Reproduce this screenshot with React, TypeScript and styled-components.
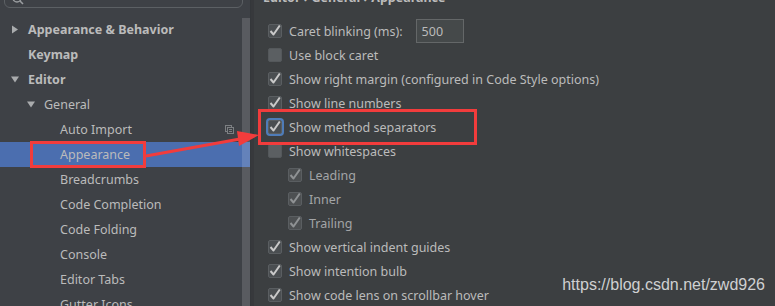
import React from 'react';
import styled, { createGlobalStyle } from 'styled-components';

const GlobalStyle = createGlobalStyle`
    body {
        margin: 0;
        background: #3c3f41;
        overflow: hidden;
    }
`;

const Frame = styled.div`
    position: relative;
    display: flex;
    width: 775px;
    height: 306px;
    overflow: hidden;
    font-family: 'Noto Sans', 'Open Sans', sans-serif;
    font-size: 12.5px;
    color: #bbbbbb;
    background: #3c3f41;
`;

const Sidebar = styled.aside`
    position: relative;
    width: 250px;
    flex-shrink: 0;
    background: #3e4146;
    display: flex;
    flex-direction: column;
`;

const SearchBox = styled.div`
    flex-shrink: 0;
    height: 24px;
    box-sizing: border-box;
    margin: -16px 7px 0 4px;
    border: 1px solid #5c6064;
    border-radius: 6px;
    display: flex;
    align-items: flex-end;
    padding: 0 0 2px 7px;
`;

const Tree = styled.ul`
    flex-shrink: 0;
    list-style: none;
    margin: 9px 0 0;
    padding: 0;
`;

const TreeRow = styled.li<{ $level: number; $selected?: boolean; $bold?: boolean }>`
    height: 25px;
    display: flex;
    align-items: center;
    padding-left: ${p => 11 + p.$level * 16}px;
    background: ${p => (p.$selected ? '#4b6eaf' : 'transparent')};
    font-weight: ${p => (p.$bold ? 700 : 400)};
    color: #bbbbbb;
    white-space: nowrap;
`;

const Caret = styled.span<{ $open?: boolean; $hidden?: boolean }>`
    width: 17px;
    flex-shrink: 0;
    display: flex;
    align-items: center;
    visibility: ${p => (p.$hidden ? 'hidden' : 'visible')};
    svg {
        transform: rotate(${p => (p.$open ? 90 : 0)}deg);
    }
`;

const RowLabel = styled.span`
    flex: 1;
`;

const RowIcon = styled.span`
    margin-right: 16px;
    display: flex;
`;

const ScrollThumb = styled.div`
    position: absolute;
    right: 0;
    top: 18px;
    bottom: 0;
    width: 8px;
    background: rgba(255, 255, 255, 0.14);
`;

const Divider = styled.div`
    width: 3px;
    flex-shrink: 0;
    background: #37393c;
    border-left: 1px solid #34373a;
`;

const Content = styled.section`
    flex: 1;
    display: flex;
    flex-direction: column;
    padding-left: 9px;
`;

const Breadcrumb = styled.div`
    flex-shrink: 0;
    margin-top: -11px;
    height: 18px;
    line-height: 18px;
    font-weight: 700;
    white-space: nowrap;
`;

const Options = styled.div`
    flex-shrink: 0;
    margin-top: 12px;
    padding-left: 5px;
    display: flex;
    flex-direction: column;
`;

const OptionRow = styled.label<{ $indent?: boolean; $dim?: boolean }>`
    flex-shrink: 0;
    height: 24px;
    display: flex;
    align-items: center;
    gap: 7px;
    padding-left: ${p => (p.$indent ? 20 : 0)}px;
    color: ${p => (p.$dim ? '#a3a5a7' : '#bbbbbb')};
    white-space: nowrap;
`;

const Box = styled.span<{ $checked?: boolean; $disabled?: boolean; $focused?: boolean }>`
    width: 14px;
    height: 14px;
    box-sizing: border-box;
    border-radius: 2px;
    flex-shrink: 0;
    display: flex;
    align-items: center;
    justify-content: center;
    background: ${p => (p.$checked ? (p.$disabled ? '#4d5052' : '#4a4e51') : '#5b5f62')};
    border: 1px solid ${p => (p.$checked ? '#5a5e61' : '#54585b')};
    box-shadow: ${p => (p.$focused ? '0 0 0 2px #4f7cb8' : 'none')};
`;

const NumberInput = styled.span`
    margin-left: 6px;
    width: 48px;
    height: 24px;
    box-sizing: border-box;
    border: 1px solid #646768;
    background: #45494a;
    display: flex;
    align-items: center;
    padding-left: 5px;
`;

const Overlay = styled.svg`
    position: absolute;
    left: 0;
    top: 0;
    pointer-events: none;
`;

const Watermark = styled.div`
    position: absolute;
    right: 10px;
    bottom: 12px;
    font-family: 'Liberation Sans', Arial, sans-serif;
    font-size: 16px;
    color: #cfd0d1;
`;

const Arrow = () => (
    <svg width="8" height="9" viewBox="0 0 8 9">
        <path d="M1 0.5 L7 4.5 L1 8.5 Z" fill="#a9abad" />
    </svg>
);

const Check = ({ color }: { color: string }) => (
    <svg width="12" height="12" viewBox="0 0 12 12">
        <path d="M1.5 6 L4.5 9.5 L10.8 0.5" fill="none" stroke={color} strokeWidth="2" strokeLinejoin="round" />
    </svg>
);

type Item = { label: string; level: number; bold?: boolean; open?: boolean; leaf?: boolean; selected?: boolean; icon?: boolean };

const treeItems: Item[] = [
    { label: 'Appearance & Behavior', level: 0, bold: true },
    { label: 'Keymap', level: 0, bold: true, leaf: true },
    { label: 'Editor', level: 0, bold: true, open: true },
    { label: 'General', level: 1, open: true },
    { label: 'Auto Import', level: 2, leaf: true, icon: true },
    { label: 'Appearance', level: 2, leaf: true, selected: true },
    { label: 'Breadcrumbs', level: 2, leaf: true },
    { label: 'Code Completion', level: 2, leaf: true },
    { label: 'Code Folding', level: 2, leaf: true },
    { label: 'Console', level: 2, leaf: true },
    { label: 'Editor Tabs', level: 2, leaf: true },
    { label: 'Gutter Icons', level: 2, leaf: true },
];

type Opt = { label: string; checked: boolean; indent?: boolean; disabled?: boolean; focused?: boolean; input?: string };

const options: Opt[] = [
    { label: 'Caret blinking (ms):', checked: true, input: '500' },
    { label: 'Use block caret', checked: false },
    { label: 'Show right margin (configured in Code Style options)', checked: true },
    { label: 'Show line numbers', checked: true },
    { label: 'Show method separators', checked: true, focused: true },
    { label: 'Show whitespaces', checked: false },
    { label: 'Leading', checked: true, indent: true, disabled: true },
    { label: 'Inner', checked: true, indent: true, disabled: true },
    { label: 'Trailing', checked: true, indent: true, disabled: true },
    { label: 'Show vertical indent guides', checked: true },
    { label: 'Show intention bulb', checked: true },
    { label: 'Show code lens on scrollbar hover', checked: true },
];

const App = () => {
    return (
        <Frame>
            <GlobalStyle />
            <Sidebar>
                <SearchBox>
                    <svg width="12" height="6" viewBox="0 6 12 6">
                        <circle cx="5" cy="5" r="4" fill="none" stroke="#9a9da0" strokeWidth="1.5" />
                        <path d="M8 8 L11 11" stroke="#9a9da0" strokeWidth="1.6" />
                    </svg>
                </SearchBox>
                <Tree>
                    {treeItems.map(item => (
                        <TreeRow key={item.label} $level={item.level} $bold={item.bold} $selected={item.selected}>
                            <Caret $open={item.open} $hidden={item.leaf}>
                                <Arrow />
                            </Caret>
                            <RowLabel>{item.label}</RowLabel>
                            {item.icon && (
                                <RowIcon>
                                    <svg width="9" height="9" viewBox="0 0 9 9">
                                        <rect x="0.5" y="0.5" width="6" height="6" fill="none" stroke="#7c7f82" />
                                        <rect x="2.5" y="2.5" width="6" height="6" fill="#3e4146" stroke="#7c7f82" />
                                        <path d="M4 4.5 H7 M4 6.5 H7" stroke="#7c7f82" />
                                    </svg>
                                </RowIcon>
                            )}
                        </TreeRow>
                    ))}
                </Tree>
                <ScrollThumb />
            </Sidebar>
            <Divider />
            <Content>
                <Breadcrumb>Editor › General › Appearance</Breadcrumb>
                <Options>
                    {options.map(o => (
                        <OptionRow key={o.label} $indent={o.indent} $dim={o.disabled}>
                            <Box $checked={o.checked} $disabled={o.disabled} $focused={o.focused}>
                                {o.checked && <Check color={o.disabled ? '#8f9294' : '#c9c9c9'} />}
                            </Box>
                            {o.label}
                            {o.input && <NumberInput>{o.input}</NumberInput>}
                        </OptionRow>
                    ))}
                </Options>
            </Content>
            <Overlay width="775" height="306">
                <rect x="31.5" y="142.5" width="113" height="24" fill="none" stroke="#f23c3c" strokeWidth="3" />
                <rect x="259.5" y="110.5" width="216" height="33" fill="none" stroke="#f23c3c" strokeWidth="3" />
                <path d="M146 156 L240 139" stroke="#f23c3c" strokeWidth="3" />
                <polygon points="259,135 237,131 239,146" fill="#f23c3c" />
            </Overlay>
            <Watermark>https://blog.csdn.net/zwd926</Watermark>
        </Frame>
    );
};

export default App;
